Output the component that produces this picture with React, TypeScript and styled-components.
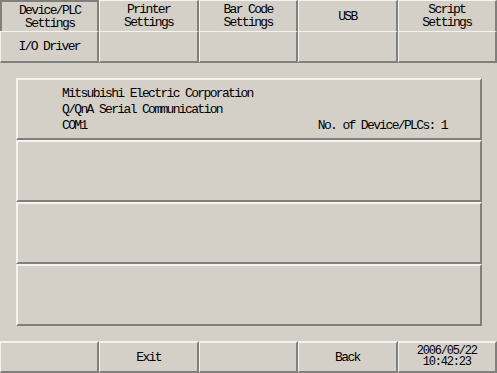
import React from "react";
import styled, { createGlobalStyle, css } from "styled-components";

const LIGHT = "#f4f3ef";
const DARK = "#7f7f7c";
const BG = "#d4d0c8";

const Global = createGlobalStyle`
  html, body { margin: 0; padding: 0; background: ${BG}; }
  body { font-family: "Liberation Mono", "DejaVu Sans Mono", monospace; color: #000; }
`;

const Page = styled.div`
  width: 497px;
  height: 373px;
  display: flex;
  flex-direction: column;
  background: ${BG};
  overflow: hidden;
`;

const TabGrid = styled.div`
  display: grid;
  grid-template-columns: repeat(5, 1fr);
  grid-template-rows: 31px 32px;
`;

const Label = styled.span`
  font-size: 13px;
  letter-spacing: -1.65px;
  line-height: 13px;
  text-align: center;
  white-space: pre-line;
`;

const Tab = styled.div<{ $selected?: boolean; $bottom?: boolean }>`
  box-sizing: border-box;
  display: flex;
  align-items: center;
  justify-content: center;
  border-top: 1px solid ${LIGHT};
  border-left: 1px solid ${LIGHT};
  border-right: 2px solid ${DARK};
  ${(p) =>
    p.$bottom &&
    css`
      border-bottom: 2px solid ${DARK};
    `}
  ${(p) =>
    p.$selected &&
    css`
      border-top: 2px solid ${DARK};
      border-left: 2px solid ${DARK};
    `}
`;

const PanelArea = styled.div`
  padding: 15px 15px 0 16px;
`;

const Panel = styled.div`
  display: grid;
  grid-template-rows: repeat(4, 62px);
`;

const PanelRow = styled.div`
  box-sizing: border-box;
  border-top: 2px solid ${LIGHT};
  border-left: 2px solid ${LIGHT};
  border-right: 2px solid ${DARK};
  border-bottom: 2px solid ${DARK};
  padding: 6px 33px 0 44px;
`;

const InfoText = styled.div`
  font-size: 13px;
  letter-spacing: -1.65px;
  line-height: 16px;
`;

const InfoLine = styled.div`
  display: flex;
  justify-content: space-between;
`;

const BottomBar = styled.div`
  margin-top: auto;
  display: grid;
  grid-template-columns: repeat(5, 1fr);
  height: 32px;
`;

const BarCell = styled.div`
  box-sizing: border-box;
  display: flex;
  align-items: center;
  justify-content: center;
  border-top: 2px solid ${LIGHT};
  border-left: 1px solid ${LIGHT};
  border-right: 2px solid ${DARK};
  border-bottom: 2px solid ${DARK};
`;

const DateLabel = styled(Label)`
  font-size: 12px;
  letter-spacing: -1.2px;
  line-height: 11px;
`;

const topTabs = [
  { label: "Device/PLC\nSettings", selected: true },
  { label: "Printer\nSettings" },
  { label: "Bar Code\nSettings" },
  { label: "USB" },
  { label: "Script\nSettings" },
];

const subTabs = ["I/O Driver", "", "", "", ""];
const bottom = ["", "Exit", "", "Back"];

export default function App() {
  return (
    <Page>
      <Global />
      <TabGrid>
        {topTabs.map((t, i) => (
          <Tab key={"t" + i} $selected={t.selected}>
            <Label>{t.label}</Label>
          </Tab>
        ))}
        {subTabs.map((t, i) => (
          <Tab key={"s" + i} $bottom>
            <Label>{t}</Label>
          </Tab>
        ))}
      </TabGrid>
      <PanelArea>
        <Panel>
          <PanelRow>
            <InfoText>
              <div>Mitsubishi Electric Corporation</div>
              <div>Q/QnA Serial Communication</div>
              <InfoLine>
                <span>COM1</span>
                <span>No. of Device/PLCs: 1</span>
              </InfoLine>
            </InfoText>
          </PanelRow>
          <PanelRow />
          <PanelRow />
          <PanelRow />
        </Panel>
      </PanelArea>
      <BottomBar>
        {bottom.map((b, i) => (
          <BarCell key={"b" + i}>
            <Label>{b}</Label>
          </BarCell>
        ))}
        <BarCell>
          <DateLabel>{"2006/05/22\n10:42:23"}</DateLabel>
        </BarCell>
      </BottomBar>
    </Page>
  );
}
